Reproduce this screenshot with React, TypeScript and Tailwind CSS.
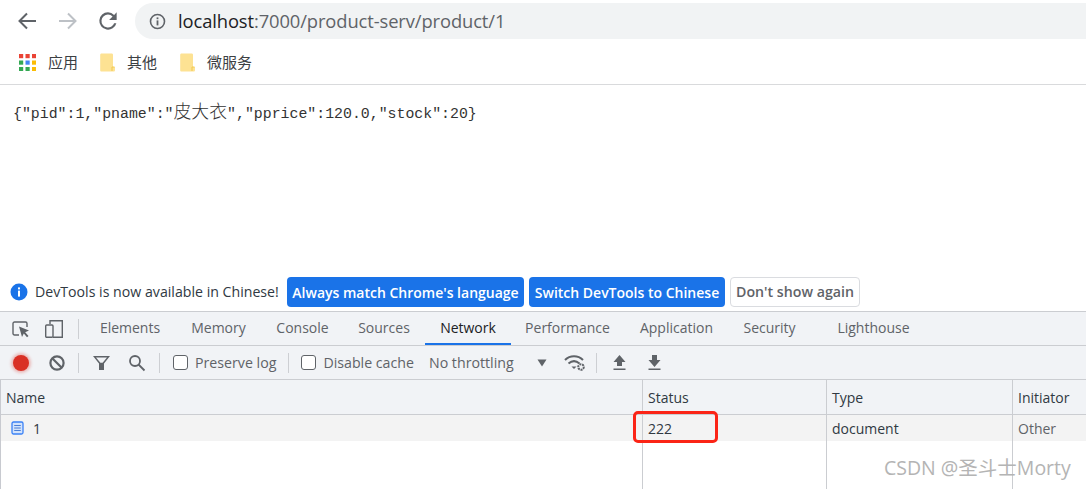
const uiFont = { fontFamily: '"Open Sans", "Noto Sans", "Noto Sans CJK SC", sans-serif' };

const tabs = [
  { label: "Elements", width: "w-[90px]" },
  { label: "Memory", width: "w-[87px]" },
  { label: "Console", width: "w-[81px]" },
  { label: "Sources", width: "w-[82px]" },
  { label: "Network", width: "w-[86px]", active: true },
  { label: "Performance", width: "w-[113px]" },
  { label: "Application", width: "w-[105px]" },
  { label: "Security", width: "w-[81px]" },
  { label: "Lighthouse", width: "w-[127px]" },
];

const AppsIcon = () => {
  const colors = ["#ea4335", "#ea4335", "#ea4335", "#34a853", "#4285f4", "#fbbc04", "#34a853", "#34a853", "#fbbc04"];
  return (
    <svg width="17" height="17" viewBox="0 0 17 17">
      {colors.map((c, i) => (
        <rect key={i} x={(i % 3) * 6.5} y={Math.floor(i / 3) * 6.5} width="4.2" height="4.2" fill={c} />
      ))}
    </svg>
  );
};

const FolderIcon = () => (
  <svg width="15" height="19" viewBox="0 0 15 19">
    <path d="M1.5 0.5H11.5C12.6 0.5 13 1 13 2V14H15V17C15 18 14.5 18.5 13.5 18.5H1.5C0.7 18.5 0.2 18 0.2 17V2C0.2 1 0.7 0.5 1.5 0.5Z" fill="#fde293" />
    <path d="M12 18V14H14.5" stroke="#f1c94f" fill="none" />
  </svg>
);

const Bookmark = ({ icon, label, className }: { icon: React.ReactNode; label: string; className: string }) => (
  <div className={`flex items-center ${className}`}>
    {icon}
    <span className="text-[15px] text-[#3c4043]">{label}</span>
  </div>
);

const ToolbarDivider = ({ className }: { className: string }) => <div className={`h-5 w-px bg-[#cdcfd3] ${className}`} />;

const Checkbox = ({ label, className }: { label: string; className: string }) => (
  <div className={`flex items-center ${className}`}>
    <div className="h-[15px] w-[15px] rounded-[3px] border border-[#5f6368] bg-white" />
    <span className="ml-[7px] text-[14.2px] text-[#5f6368]">{label}</span>
  </div>
);

const Cell = ({ children, className = "" }: { children?: React.ReactNode; className?: string }) => (
  <div className={`flex items-center px-[5px] text-[14px] ${className}`}>{children}</div>
);

export default function App() {
  return (
    <div className="relative flex h-[489px] w-[1086px] flex-col overflow-hidden bg-white" style={uiFont}>
      {/* browser chrome */}
      <div className="flex h-[42px] items-center">
        <div className="ml-[16px] flex w-[119px] items-center">
          <svg width="22" height="22" viewBox="0 0 22 22" fill="none" stroke="#5f6368" strokeWidth="2">
            <path d="M20 11H4M11 3.5L3.5 11L11 18.5" />
          </svg>
          <svg className="ml-[19px]" width="22" height="22" viewBox="0 0 22 22" fill="none" stroke="#bdc1c6" strokeWidth="2">
            <path d="M2 11H18M11 3.5L18.5 11L11 18.5" />
          </svg>
          <svg className="ml-[16px]" width="26" height="26" viewBox="0 0 24 24" fill="#5f6368">
            <path d="M17.65 6.35A7.96 7.96 0 0 0 12 4a8 8 0 1 0 7.73 10h-2.08A6 6 0 1 1 12 6c1.66 0 3.14.69 4.22 1.78L13 11h7V4z" />
          </svg>
        </div>
        <div className="flex h-[36px] flex-1 items-center rounded-l-full bg-[#f1f3f4] pl-[14px]">
          <svg width="17" height="17" viewBox="0 0 17 17" fill="none">
            <circle cx="8.5" cy="8.5" r="7" stroke="#5f6368" strokeWidth="1.6" />
            <rect x="7.6" y="7.4" width="1.8" height="5" fill="#5f6368" />
            <rect x="7.6" y="4.4" width="1.8" height="1.8" fill="#5f6368" />
          </svg>
          <span className="ml-[12px] text-[18.35px] tracking-[-0.1px] text-[#5f6368]">
            <span className="text-[#202124]">localhost</span>:7000/product-serv/product/1
          </span>
        </div>
      </div>
      <div className="flex h-[43px] items-center border-b border-[#d9dadc] pb-[2px]">
        <Bookmark className="ml-[19px] w-[81px] gap-[12px]" icon={<AppsIcon />} label="应用" />
        <Bookmark className="w-[80px] gap-[12px]" icon={<FolderIcon />} label="其他" />
        <Bookmark className="gap-[12px]" icon={<FolderIcon />} label="微服务" />
      </div>

      {/* page body */}
      <div className="h-[192px] pl-[13px] pt-[15px] text-[14.87px] leading-[26px] text-[#333]" style={{ fontFamily: '"Liberation Mono", "Noto Sans CJK SC", monospace' }}>
        {'{"pid":1,"pname":"'}
        <span className="text-[17.85px] font-light">皮大衣</span>
        {'","pprice":120.0,"stock":20}'}
      </div>

      {/* infobar */}
      <div className="flex h-[34px] items-center pb-[4px] pl-[10px]">
        <svg width="18" height="18" viewBox="0 0 18 18">
          <circle cx="9" cy="9" r="8.5" fill="#1a73e8" />
          <rect x="8" y="7.6" width="2" height="6" fill="#fff" />
          <rect x="8" y="4.4" width="2" height="2" fill="#fff" />
        </svg>
        <span className="ml-[7px] w-[252px] text-[14.17px] whitespace-nowrap text-[#303942]">DevTools is now available in Chinese!</span>
        <div className="flex h-[30px] w-[237px] items-center justify-center rounded-[4px] bg-[#1a73e8] text-[14px] font-semibold text-white">
          Always match Chrome's language
        </div>
        <div className="ml-[5px] flex h-[30px] w-[196px] items-center justify-center rounded-[4px] bg-[#1a73e8] text-[14px] font-semibold text-white">
          Switch DevTools to Chinese
        </div>
        <div className="ml-[5px] flex h-[30px] w-[130px] items-center justify-center rounded-[4px] border border-[#dadce0] text-[14.2px] font-semibold text-[#5f6368]">
          Don't show again
        </div>
      </div>

      {/* devtools tabs */}
      <div className="flex h-[35px] items-stretch border-y border-[#cbcdd1] bg-[#f1f3f6]">
        <div className="flex w-[85px] items-center pl-[12px]">
          <svg width="18" height="18" viewBox="0 0 18 18" fill="none">
            <path d="M7 15H2.5C1.7 15 1 14.3 1 13.5V3.5C1 2.7 1.7 2 2.5 2H13.5C14.3 2 15 2.7 15 3.5V7" stroke="#5f6368" strokeWidth="1.4" />
            <path d="M7 6.5L17 10.5L13.2 12.2L16.5 16L15 17.2L11.8 13.4L10 17Z" fill="#5f6368" />
          </svg>
          <svg className="ml-[14px]" width="20" height="20" viewBox="0 0 20 20" fill="none" stroke="#5f6368" strokeWidth="1.4">
            <path d="M6 5V1.7H18.3V18.3H9" />
            <rect x="1.7" y="6" width="7.3" height="12.3" rx="1" />
          </svg>
          <div className="ml-[14px] h-5 w-px bg-[#cdcfd3]" />
        </div>
        {tabs.map((tab) => (
          <div
            key={tab.label}
            className={`flex items-center justify-center border-b-2 text-[14px] ${tab.width} ${
              tab.active ? "border-[#1a73e8] text-[#202124]" : "border-transparent text-[#5f6368]"
            }`}
          >
            {tab.label}
          </div>
        ))}
      </div>

      {/* network toolbar */}
      <div className="flex h-[34px] items-center border-b border-[#cbcdd1] bg-[#f1f3f6] pl-[13px]">
        <div className="h-[16px] w-[16px] rounded-full bg-[#d93025] shadow-[0_0_3px_2px_rgba(217,48,37,0.3)]" />
        <svg className="ml-[19px]" width="18" height="18" viewBox="0 0 18 18" fill="none" stroke="#5f6368" strokeWidth="2.2">
          <circle cx="9" cy="9" r="6.6" />
          <path d="M4.5 4.5L13.5 13.5" />
        </svg>
        <ToolbarDivider className="ml-[12px]" />
        <svg className="ml-[13px]" width="19" height="18" viewBox="0 0 19 18" fill="#5f6368">
          <path d="M1 2H18L12 9.5V16H7V9.5ZM4 3.6L8.4 8.8H10.6L15 3.6Z" />
        </svg>
        <svg className="ml-[17px]" width="18" height="18" viewBox="0 0 18 18" fill="none" stroke="#5f6368" strokeWidth="1.8">
          <circle cx="7" cy="7" r="5" />
          <path d="M10.5 10.5L16.5 16.5" />
        </svg>
        <ToolbarDivider className="ml-[13px]" />
        <Checkbox className="ml-[13px]" label="Preserve log" />
        <ToolbarDivider className="ml-[12px]" />
        <Checkbox className="ml-[12px]" label="Disable cache" />
        <span className="ml-[15px] text-[14.2px] text-[#5f6368]">No throttling</span>
        <svg className="ml-[23px]" width="10" height="8" viewBox="0 0 10 8" fill="#5f6368">
          <path d="M0.5 0.5H9.5L5 7.5Z" />
        </svg>
        <svg className="ml-[17px]" width="22" height="18" viewBox="0 0 22 18" fill="none">
          <path d="M1 6C6 1 14 1 19 6" stroke="#5f6368" strokeWidth="2" />
          <path d="M4.5 9.5C8 6.5 12 6.5 15.5 9.5" stroke="#5f6368" strokeWidth="2" />
          <path d="M7.5 12.5H12.5L10 15Z" fill="#5f6368" />
          <circle cx="17" cy="13" r="2.8" stroke="#5f6368" strokeWidth="2" strokeDasharray="2 0.8" />
        </svg>
        <ToolbarDivider className="ml-[10px]" />
        <svg className="ml-[15px]" width="15" height="17" viewBox="0 0 15 17" fill="#5f6368">
          <path d="M7.5 1L13.5 8H10V12H5V8H1.5ZM1.5 14.5H13.5V16H1.5Z" />
        </svg>
        <svg className="ml-[20px]" width="15" height="17" viewBox="0 0 15 17" fill="#5f6368">
          <path d="M5 1H10V6H13.5L7.5 13L1.5 6H5ZM1.5 14.5H13.5V16H1.5Z" />
        </svg>
      </div>

      {/* network table */}
      <div className="grid flex-1 grid-cols-[641px_184px_186px_1fr] grid-rows-[35px_26px_1fr] border-l border-[#c8cad0] text-[#303942]">
        <Cell className="border-b border-[#cbcdd1] bg-[#f1f3f6]">Name</Cell>
        <Cell className="border-b border-l border-[#cbcdd1] bg-[#f1f3f6]">Status</Cell>
        <Cell className="border-b border-l border-[#cbcdd1] bg-[#f1f3f6]">Type</Cell>
        <Cell className="border-b border-l border-[#cbcdd1] bg-[#f1f3f6]">Initiator</Cell>
        <Cell className="bg-[#f3f3f3] pl-[10px]">
          <svg width="13" height="14" viewBox="0 0 13 14" fill="none">
            <rect x="1" y="1" width="11" height="12" rx="1.5" fill="#d2e3fc" stroke="#3b82f6" strokeWidth="1.3" />
            <path d="M3.2 4.5H9.8M3.2 7H9.8M3.2 9.5H9.8" stroke="#4a7fd6" />
          </svg>
          <span className="ml-[9px]">1</span>
        </Cell>
        <Cell className="border-l border-[#cbcdd1] bg-[#f3f3f3]">222</Cell>
        <Cell className="border-l border-[#cbcdd1] bg-[#f3f3f3]">document</Cell>
        <Cell className="border-l border-[#cbcdd1] bg-[#f3f3f3] text-[#5f6368]">Other</Cell>
        <div />
        <div className="border-l border-[#cbcdd1]" />
        <div className="border-l border-[#cbcdd1]" />
        <div className="border-l border-[#cbcdd1]" />
      </div>

      {/* red annotation + watermark lie over the table */}
      <div className="absolute left-[633px] top-[411px] h-[32px] w-[85px] rounded-[5px] border-[3px] border-[#fb2416]" />
      <div className="absolute left-[884px] top-[454px] text-[19.5px] leading-[28px] text-[#b4b4b4]">CSDN @圣斗士Morty</div>
    </div>
  );
}
